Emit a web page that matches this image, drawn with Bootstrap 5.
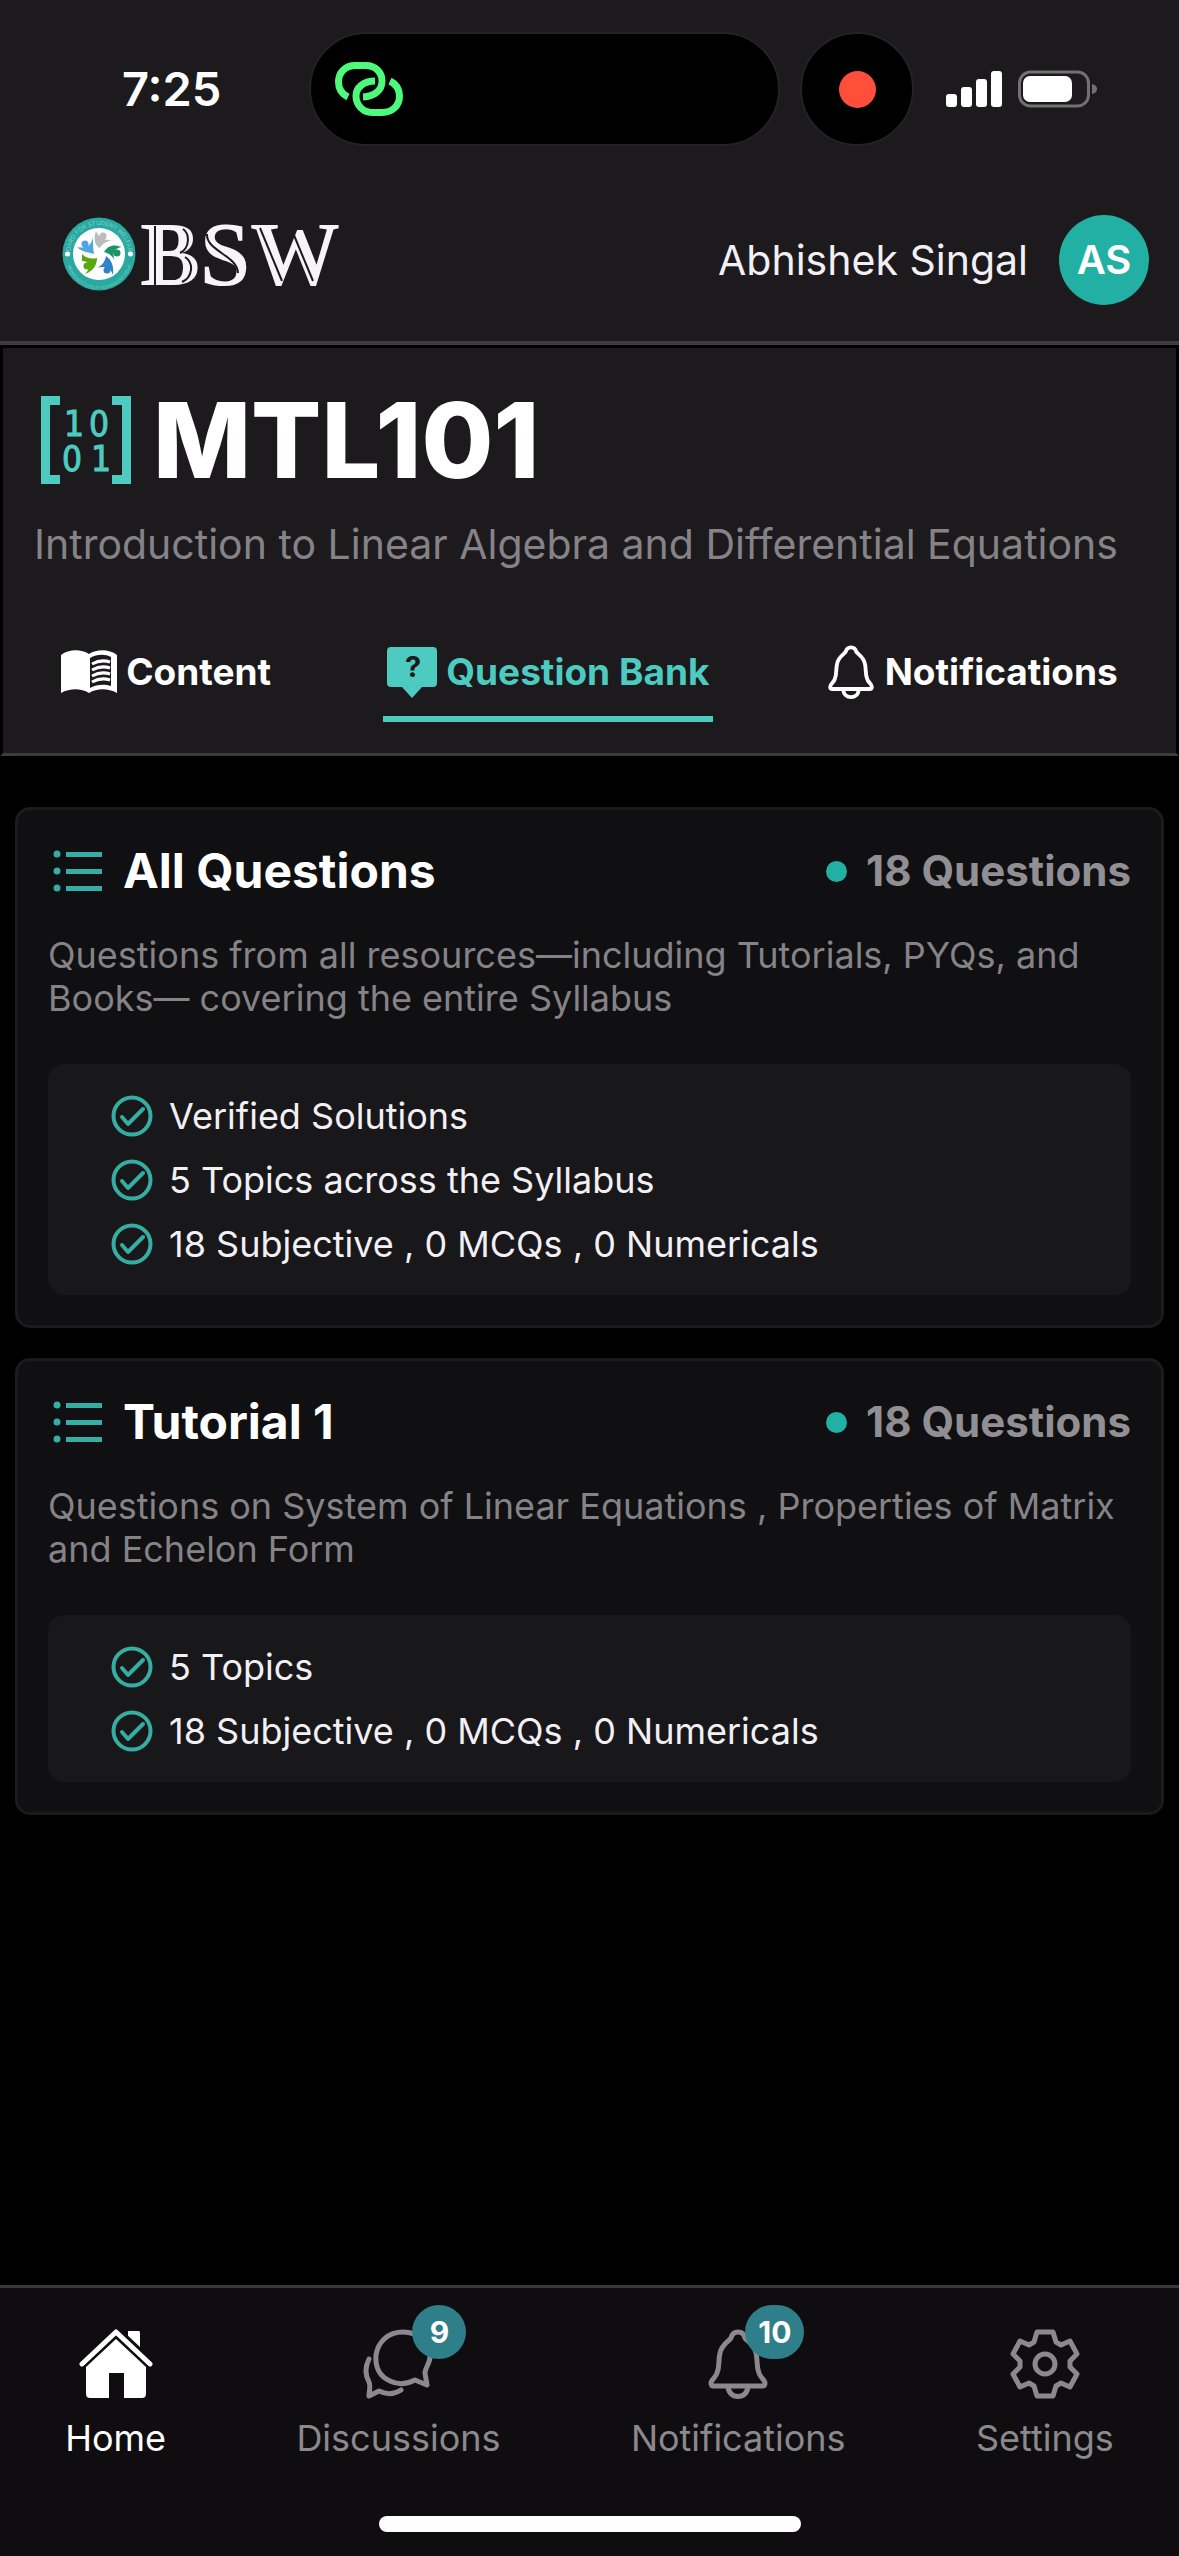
<!DOCTYPE html>
<html lang="en">
<head>
<meta charset="utf-8">
<meta name="viewport" content="width=device-width, initial-scale=1">
<title>MTL101 Question Bank</title>
<link href="https://cdn.jsdelivr.net/npm/bootstrap@5.3.0/dist/css/bootstrap.min.css" rel="stylesheet">
<style>
  body { background: #000; color: #fff; font-family: Inter, "Liberation Sans", sans-serif; font-size: 36px; line-height: 44px; }
  a, a:hover { color: inherit; text-decoration: none; }
  svg { display: block; flex: none; }
  .top-area { background: #1c1a1d; border-bottom: 4px solid #3e3c40; }
  .status-bar { padding: 32px 81px 0 122px; }
  .clock { font-size: 47px; line-height: 56px; font-weight: 600; margin-right: 88px; }
  .island { height: 114px; border-radius: 57px; background: #000; border: 2px solid #232225; padding-left: 24px; }
  .rec { width: 114px; height: 114px; background: #000; border: 2px solid #232225; margin-left: 20px; margin-right: 32px; }
  .rec-dot { width: 37px; height: 37px; background: #ff4f3a; }
  .brand-bar { padding: 69px 30px 36px 62px; }
  .user-name { font-size: 41px; line-height: 48px; color: #f2f0f4; }
  .avatar { width: 90px; height: 90px; background: #22b0a5; font-size: 40px; font-weight: 600; margin-left: 31px; }
  .course { background: #1c1a1d; border: 3px solid #000; border-bottom: 3px solid #3e3c40; }
  .course-title { padding: 40px 32px 0 38px; gap: 22px; }
  .course-title h1 { font-size: 104px; line-height: 104px; font-weight: 800; }
  .course-sub { font-size: 41px; line-height: 48px; color: #858387; padding: 28px 32px 0 31px; }
  .tabs { padding: 65px 0 31px; }
  .tab-item { font-size: 37px; font-weight: 700; padding: 12px 4px 17px; gap: 9px; border-bottom: 6px solid transparent; }
  .tab-item.current, .tab-item.current:hover { color: #4ecbc1; border-color: #4ecbc1; }
  .list-area { padding: 51px 15px 30px 15px; gap: 30px; }
  .q-card { background: #100f12; border: 3px solid #1b1a1d; border-radius: 15px; padding: 33px 30px 30px; }
  .q-head h2 { font-size: 48px; line-height: 56px; font-weight: 700; }
  .q-head { padding-left: 5px; }
  .q-title { gap: 20px; }
  .q-count { font-size: 42px; font-weight: 700; color: #918f93; gap: 19px; }
  .q-dot { width: 21px; height: 21px; background: #22b0a5; }
  .q-desc { color: #858387; line-height: 43px; padding-top: 35px; padding-bottom: 44px; }
  .q-box { background: #18171a; border-radius: 16px; padding: 30px 62px 29px 63px; gap: 20px; color: #f2f0f4; }
  .q-box li { gap: 16px; }
  .bottom-nav { background: #0f0d10; border-top: 3px solid #38363a; padding-bottom: 24px; }
  .nav-entry { color: #8b898d; padding-top: 41px; gap: 17px; }
  .nav-entry.current, .nav-entry.current:hover { color: #fff; }
  .nav-entry:hover { color: #8b898d; }
  .count-pill { position: absolute; top: -24px; left: 49px; min-width: 54px; height: 54px; padding: 0 12px; border-radius: 27px; background: #2e7f8a; color: #fff; font-size: 30px; line-height: 54px; font-weight: 700; text-align: center; }
  .bell-icon .count-pill { left: 37px; padding: 0 13px; }
  .home-bar { width: 422px; height: 16px; border-radius: 8px; background: #fff; margin-top: 56px; }
</style>
</head>
<body class="min-vh-100 d-flex flex-column">

<svg width="0" height="0" class="position-absolute" aria-hidden="true">
  <symbol id="i-bell" viewBox="0 0 60 70"><g fill="none" stroke="currentColor" stroke-width="5" stroke-linejoin="round"><path d="M30 3C26 3 24 5 23 9C21 12 14 15 12 24C10 32 12 37 9 44C8 48 3 51 3 54Q3 57 6 57H54Q57 57 57 54C57 51 52 48 51 44C48 37 50 32 48 24C46 15 39 12 37 9C36 5 34 3 30 3Z"/><path d="M20 57C20 71 40 71 40 57"/></g></symbol>
  <symbol id="i-list" viewBox="0 0 50 42"><g fill="#35ada2"><circle cx="4" cy="4" r="3.500"/><circle cx="4" cy="21" r="3.500"/><circle cx="4" cy="38" r="3.500"/><path d="M13 2h36v5H13zM13 19h36v5H13zM13 36h36v5H13z"/></g></symbol>
  <symbol id="i-check" viewBox="0 0 42 42"><g fill="none" stroke="#35ada2" stroke-width="4"><circle cx="21" cy="21" r="18.500"/><path d="M11 22l6 7 15-15" stroke-linecap="round" stroke-linejoin="round"/></g></symbol>
</svg>

<header class="top-area">
  <div class="status-bar d-flex align-items-center">
    <time class="clock">7:25</time>
    <div class="island flex-grow-1 d-flex align-items-center">
      <svg width="68" height="54" viewBox="0 0 68 54" fill="none" stroke="#4dfa7b" stroke-width="7"><path d="M13 35C7 32 3.500 27 3.500 20C3.500 10 11 3.500 20 3.500H31C41 3.500 47 11 47 19C47 28 40 34.500 28 35"/><path d="M40 19C28 19 21 26 21 34C21 43 28 50.500 37 50.500H47C57 50.500 64.500 44 64.500 34C64.500 27 61 22 55 19"/></svg>
    </div>
    <div class="rec rounded-circle d-flex align-items-center justify-content-center"><div class="rec-dot rounded-circle"></div></div>
    <svg width="152" height="38" viewBox="0 0 152 38"><g fill="#fff"><rect x="0" y="24" width="11" height="13" rx="3"/><rect x="15" y="17" width="11" height="20" rx="3"/><rect x="30" y="9" width="11" height="28" rx="3"/><rect x="45" y="1" width="11" height="36" rx="3"/><rect x="77" y="6" width="49" height="26" rx="7"/></g><rect x="73.500" y="2" width="69" height="34" rx="11" fill="none" stroke="#727074" stroke-width="3"/><path d="M146 14q5 1 5 5t-5 5z" fill="#727074"/></svg>
  </div>
  <div class="brand-bar d-flex align-items-center justify-content-between">
    <a href="#" aria-label="BSW">
      <svg width="284" height="86" viewBox="0 0 284 86" overflow="visible">
        <circle cx="37" cy="37" r="36.500" fill="#2aa9a0"/>
        <defs><path id="arc-a" d="M8 37a29 29 0 0 1 58 0"/><path id="arc-b" d="M4 39a33 33 0 0 0 66 0"/></defs>
        <g font-family="Inter, sans-serif" font-size="6" fill="#7fd0ca" text-anchor="middle"><text><textPath href="#arc-a" startOffset="50%">BOARD FOR STUDENT WELFARE</textPath></text><text font-size="4"><textPath href="#arc-b" startOffset="50%">INDIAN INSTITUTE OF TECHNOLOGY DELHI</textPath></text></g>
        <circle cx="37" cy="37" r="26" fill="#fff"/>
        <circle cx="5.500" cy="37" r="2.500" fill="#fff"/><circle cx="68.500" cy="37" r="2.500" fill="#fff"/>
        <g fill="#bcbcc0"><path d="M34 14C31 22 33 29 38 31C41 26 45 24 51 23C44 24 37 21 34 14Z"/><circle cx="41" cy="19" r="3.500"/></g>
        <g fill="#4fa5e2"><path d="M31 20C31 26 31 32 32 37C26 35 20 35 15 30C24 32 30 28 31 20Z"/><circle cx="23" cy="27" r="3.500"/></g>
        <g fill="#1b9568"><path d="M42 35C46 28 52 27 60 30C52 31 49 37 54 46C52 40 47 36 42 35Z"/><circle cx="55" cy="36" r="3.500"/></g>
        <g fill="#57a90f"><path d="M20 37C25 42 30 42 35 41C35 47 32 54 23 57C30 50 27 44 20 44Z"/><circle cx="25" cy="49" r="3.500"/></g>
        <g fill="#2f83c6"><path d="M34 51C39 50 43 45 44 39C50 43 52 50 51 58C48 49 42 49 34 51Z"/><circle cx="45" cy="53" r="3.500"/></g>
        <text x="78" y="68" font-family="'Liberation Serif', serif" font-weight="700" font-size="90" fill="#f6f4f8">BSW</text>
        <g fill="none" stroke="#1c1a1d" stroke-width="2"><path d="M93 9V68M121 12C128 17 128 31 118 36M123 40C132 46 131 60 120 65M145 17C144 34 175 38 176 56M198 11L220 64M229 11L251 64"/></g>
      </svg>
    </a>
    <div class="d-flex align-items-center">
      <span class="user-name">Abhishek Singal</span>
      <span class="avatar rounded-circle d-flex align-items-center justify-content-center">AS</span>
    </div>
  </div>
</header>

<section class="course">
  <div class="course-title d-flex align-items-center">
    <svg width="90" height="90" viewBox="0 0 90 90" fill="#4ecbc1"><path d="M0 1H19V10H9V80H19V89H0ZM90 1H71V10H81V80H71V89H90Z"/><g font-family="'DejaVu Sans Condensed', 'DejaVu Sans', sans-serif" font-stretch="condensed" font-size="35" text-anchor="middle" stroke="#4ecbc1"><text x="33" y="41">1</text><text x="58" y="41">0</text><text x="31" y="76">0</text><text x="60" y="76">1</text></g></svg>
    <h1 class="mb-0">MTL101</h1>
  </div>
  <p class="course-sub mb-0">Introduction to Linear Algebra and Differential Equations</p>
  <nav class="tabs d-flex justify-content-around" aria-label="Course">
    <a href="#" class="tab-item d-flex align-items-center">
      <svg width="56" height="44" viewBox="0 0 56 44"><path fill="currentColor" d="M0 5C8-1 20-1 28 4C36-1 48-1 56 5V43C47 38 36 38 28 43C20 38 9 38 0 43Z"/><path fill="#1c1a1d" d="M29 8C36 4 44 4 50 7V36C44 34 36 34 29 38Z"/><path fill="none" stroke="currentColor" stroke-width="3" d="M31 14Q40 9 49 12M31 20Q40 15 49 18M31 26Q40 21 49 24M31 32Q40 27 49 30"/></svg>
      <span>Content</span></a>
    <a href="#" class="tab-item current d-flex align-items-center" aria-current="page">
      <svg width="50" height="51" viewBox="0 0 50 51"><path fill="currentColor" d="M4 0H46Q50 0 50 4V36Q50 40 46 40H35L25 51L15 40H4Q0 40 0 36V4Q0 0 4 0Z"/><text x="26" y="30" text-anchor="middle" font-family="Inter, sans-serif" font-weight="700" font-size="29" fill="#1c1a1d">?</text></svg>
      <span>Question Bank</span></a>
    <a href="#" class="tab-item d-flex align-items-center">
      <svg width="50" height="54"><use href="#i-bell"/></svg>
      <span>Notifications</span></a>
  </nav>
</section>

<main class="list-area flex-grow-1 d-flex flex-column">
  <article class="q-card">
    <div class="q-head d-flex align-items-center justify-content-between">
      <div class="q-title d-flex align-items-center"><svg width="50" height="42"><use href="#i-list"/></svg><h2 class="mb-0">All Questions</h2></div>
      <div class="q-count d-flex align-items-center"><span class="q-dot rounded-circle"></span>18 Questions</div>
    </div>
    <p class="q-desc mb-0">Questions from all resources—including Tutorials, PYQs, and Books— covering the entire Syllabus</p>
    <ul class="q-box list-unstyled mb-0 d-flex flex-column">
      <li class="d-flex align-items-center"><svg width="42" height="42"><use href="#i-check"/></svg>Verified Solutions</li>
      <li class="d-flex align-items-center"><svg width="42" height="42"><use href="#i-check"/></svg>5 Topics across the Syllabus</li>
      <li class="d-flex align-items-center"><svg width="42" height="42"><use href="#i-check"/></svg>18 Subjective , 0 MCQs , 0 Numericals</li>
    </ul>
  </article>
  <article class="q-card">
    <div class="q-head d-flex align-items-center justify-content-between">
      <div class="q-title d-flex align-items-center"><svg width="50" height="42"><use href="#i-list"/></svg><h2 class="mb-0">Tutorial 1</h2></div>
      <div class="q-count d-flex align-items-center"><span class="q-dot rounded-circle"></span>18 Questions</div>
    </div>
    <p class="q-desc mb-0">Questions on System of Linear Equations , Properties of Matrix and Echelon Form</p>
    <ul class="q-box list-unstyled mb-0 d-flex flex-column">
      <li class="d-flex align-items-center"><svg width="42" height="42"><use href="#i-check"/></svg>5 Topics</li>
      <li class="d-flex align-items-center"><svg width="42" height="42"><use href="#i-check"/></svg>18 Subjective , 0 MCQs , 0 Numericals</li>
    </ul>
  </article>
</main>

<footer class="bottom-nav">
  <nav class="d-flex justify-content-around" aria-label="Main">
    <a href="#" class="nav-entry current d-flex flex-column align-items-center" aria-current="page">
      <svg width="74" height="70" viewBox="0 0 74 70"><path fill="currentColor" d="M49 2H60Q61 2 61 4V24L49 13Z"/><path d="M3 35L37 3L71 35" fill="none" stroke="#0f0d10" stroke-width="11"/><path d="M3 35L37 3L71 35" fill="none" stroke="currentColor" stroke-width="5" stroke-linecap="round" stroke-linejoin="round"/><path fill="currentColor" d="M37 10L67 38V65Q67 69 63 69H45V44H30V69H11Q7 69 7 65V38Z"/></svg>
      <span>Home</span></a>
    <a href="#" class="nav-entry d-flex flex-column align-items-center">
      <span class="position-relative"><svg width="70" height="70" viewBox="0 0 70 70" fill="none" stroke="currentColor" stroke-width="5" stroke-linecap="round" stroke-linejoin="round"><path d="M52 51C44 55 35 56 27 52C16 47 12 38 13 26C15 13 25 3 40 3C56 3 67 14 67 28C67 34 62 39 62 44L64 56Z"/><path d="M6 30C2 38 2 46 6 53C8 57 6 62 6 67L16 62C24 66 32 65 38 61"/></svg><span class="count-pill">9</span></span>
      <span>Discussions</span></a>
    <a href="#" class="nav-entry d-flex flex-column align-items-center">
      <span class="position-relative bell-icon"><svg width="60" height="70"><use href="#i-bell"/></svg><span class="count-pill">10</span></span>
      <span>Notifications</span></a>
    <a href="#" class="nav-entry d-flex flex-column align-items-center">
      <svg width="70" height="70" viewBox="-35 -35 70 70" fill="none" stroke="currentColor" stroke-width="5" stroke-linejoin="round"><path d="M-8-32H8L11-22L16-19L25-23L32-10L25-3V3L32 10L25 23L16 19L11 22L8 32H-8L-11 22L-16 19L-25 23L-32 10L-25 3V-3L-32-10L-25-23L-16-19L-11-22Z"/><circle r="10"/></svg>
      <span>Settings</span></a>
  </nav>
  <div class="home-bar mx-auto"></div>
</footer>
<script src="https://cdn.jsdelivr.net/npm/bootstrap@5.3.0/dist/js/bootstrap.bundle.min.js"></script>
</body>
</html>
